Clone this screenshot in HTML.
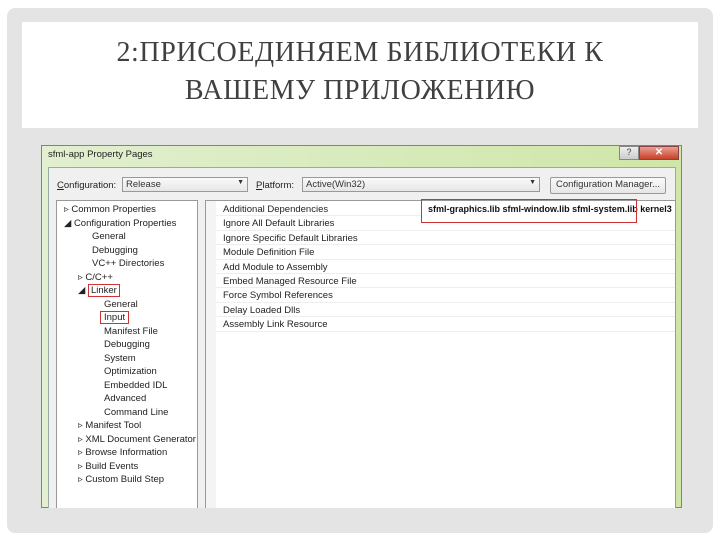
<!DOCTYPE html>
<html><head><meta charset="utf-8"><style>
*{margin:0;padding:0;box-sizing:border-box}
body{width:720px;height:540px;background:#fff;position:relative;overflow:hidden;font-family:"Liberation Sans",sans-serif}
.abs{position:absolute}
.panel{left:7px;top:8px;width:706px;height:525px;background:#e4e4e4;border-radius:8px}
.tbox{left:22px;top:22px;width:676px;height:106px;background:#fff}
.title{left:22px;top:34px;width:676px;text-align:center;font-family:"Liberation Serif",serif;font-size:28px;line-height:38px;color:#404040;letter-spacing:0.6px}
.dlg{left:41px;top:145px;width:641px;height:363px;background:linear-gradient(90deg,#e2efd0,#d6eab8 60%,#cfe6a8);border:1px solid #7a8a6a}
.content{left:48px;top:167px;width:628px;height:341px;background:#f0f0f0;border:1px solid #9aa;border-bottom:none}
.t{font-size:9.5px;color:#222;white-space:nowrap;line-height:13.5px}
.sel{height:15px;border:1px solid #999;background:linear-gradient(#fafafa,#e6e6e6);font-size:9.5px;padding:1px 3px;color:#333}
.tree{left:56px;top:200px;width:142px;height:308px;background:#fff;border:1px solid #999;border-bottom:none}
.grid{left:205px;top:200px;width:471px;height:308px;background:#fff;border:1px solid #999;border-bottom:none}
.row{position:absolute;left:10px;width:460px;height:14.4px;border-bottom:1px solid #eee}
</style></head><body>
<div class="abs panel"></div>
<div class="abs tbox"></div>
<div class="abs title">2:ПРИСОЕДИНЯЕМ БИБЛИОТЕКИ К<br>ВАШЕМУ ПРИЛОЖЕНИЮ</div>
<div class="abs dlg"></div>
<div class="abs t" style="left:48px;top:148px">sfml-app Property Pages</div>
<div class="abs" style="left:619px;top:146px;width:20px;height:14px;background:linear-gradient(#eee,#ccc);border:1px solid #888;font-size:9px;text-align:center;color:#444">?</div>
<div class="abs" style="left:639px;top:146px;width:40px;height:14px;background:linear-gradient(#e8a090,#c8402a);border:1px solid #844;font-size:10px;text-align:center;color:#fff;font-weight:bold">✕</div>
<div class="abs content"></div>
<div class="abs t" style="left:57px;top:179px"><u>C</u>onfiguration:</div>
<div class="abs sel" style="left:122px;top:177px;width:126px">Release<span style="float:right;font-size:7px">▼</span></div>
<div class="abs t" style="left:256px;top:179px"><u>P</u>latform:</div>
<div class="abs sel" style="left:302px;top:177px;width:238px">Active(Win32)<span style="float:right;font-size:7px">▼</span></div>
<div class="abs sel" style="left:550px;top:177px;width:116px;height:17px;text-align:center;border-radius:2px">Configuration Manager...</div>
<div class="abs tree"></div>
<div class="abs grid"></div>
<div class="abs" style="left:206px;top:201px;width:10px;height:307px;background:#f4f4f4"></div>
<div class="abs t" style="left:64px;top:203px;line-height:13.5px">
<div>▹ Common Properties</div>
<div>◢ Configuration Properties</div>
<div style="padding-left:28px">General</div>
<div style="padding-left:28px">Debugging</div>
<div style="padding-left:28px">VC++ Directories</div>
<div style="padding-left:14px">▹ C/C++</div>
<div style="padding-left:14px">◢ <span style="border:1px solid #c33;padding:0 2px">Linker</span></div>
<div style="padding-left:40px">General</div>
<div style="padding-left:36px"><span style="border:1px solid #c33;padding:0 3px">Input</span></div>
<div style="padding-left:40px">Manifest File</div>
<div style="padding-left:40px">Debugging</div>
<div style="padding-left:40px">System</div>
<div style="padding-left:40px">Optimization</div>
<div style="padding-left:40px">Embedded IDL</div>
<div style="padding-left:40px">Advanced</div>
<div style="padding-left:40px">Command Line</div>
<div style="padding-left:14px">▹ Manifest Tool</div>
<div style="padding-left:14px">▹ XML Document Generator</div>
<div style="padding-left:14px">▹ Browse Information</div>
<div style="padding-left:14px">▹ Build Events</div>
<div style="padding-left:14px">▹ Custom Build Step</div>
</div>
<div class="abs" style="left:205px;top:202px">
<div class="row" style="top:0"></div><div class="row" style="top:14.4px"></div><div class="row" style="top:28.8px"></div><div class="row" style="top:43.2px"></div><div class="row" style="top:57.6px"></div><div class="row" style="top:72px"></div><div class="row" style="top:86.4px"></div><div class="row" style="top:100.8px"></div><div class="row" style="top:115.2px"></div>
</div>
<div class="abs t" style="left:223px;top:203px;line-height:14.4px">
<div>Additional Dependencies</div>
<div>Ignore All Default Libraries</div>
<div>Ignore Specific Default Libraries</div>
<div>Module Definition File</div>
<div>Add Module to Assembly</div>
<div>Embed Managed Resource File</div>
<div>Force Symbol References</div>
<div>Delay Loaded Dlls</div>
<div>Assembly Link Resource</div>
</div>
<div class="abs" style="left:421px;top:201px;width:254px;height:16px;background:#fff"></div>
<div class="abs t" style="left:428px;top:203px;font-weight:bold;font-size:9px;color:#111">sfml-graphics.lib sfml-window.lib sfml-system.lib kernel3</div>
<div class="abs" style="left:421px;top:199px;width:216px;height:24px;border:1px solid #c33"></div>
</body></html>
